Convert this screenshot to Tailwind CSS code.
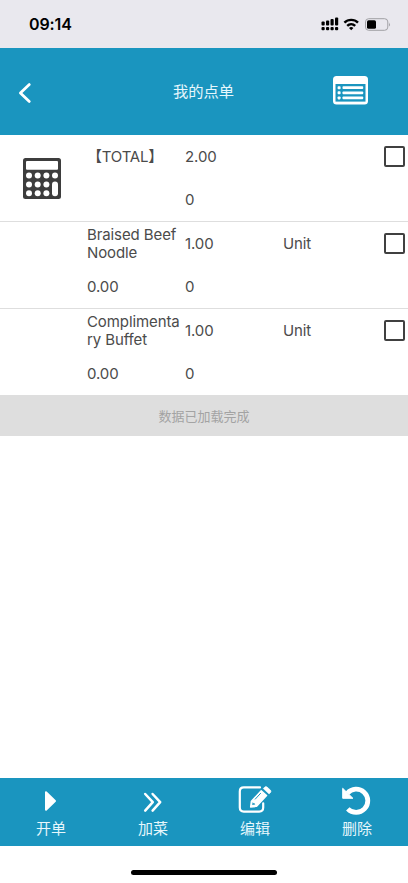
<!DOCTYPE html>
<html lang="zh-CN">
<head>
<meta charset="utf-8">
<meta name="viewport" content="width=device-width, initial-scale=1">
<title>我的点单</title>
<script src="https://cdn.jsdelivr.net/npm/@tailwindcss/browser@4"></script>
</head>
<body class="bg-white">
<div class="flex h-[883px] w-[408px] flex-col overflow-hidden bg-white font-['Inter','Noto_Sans_CJK_SC',sans-serif] text-[15px] leading-[18px] text-[#4b4b4b]">
  <!-- status bar -->
  <div class="flex h-12 shrink-0 items-center justify-between bg-[#e9e8ee] pr-[17px] pl-[29px]">
    <span class="text-[16px] font-semibold tracking-[-0.1px] text-black">09:14</span>
    <svg class="h-4 w-[70px]" viewBox="321 16 70 16" fill="#000">
      <g>
        <rect x="321.5" y="21.5" width="3.2" height="4" rx="1"/><rect x="326" y="20.5" width="3.2" height="5" rx="1"/><rect x="330.5" y="19" width="3.2" height="6.5" rx="1"/><rect x="335" y="17.5" width="3.2" height="8" rx="1"/>
        <rect x="321.5" y="27" width="3.2" height="3.2" rx="1"/><rect x="326" y="27" width="3.2" height="3.2" rx="1"/><rect x="330.5" y="27" width="3.2" height="3.2" rx="1"/><rect x="335" y="27" width="3.2" height="3.2" rx="1"/>
      </g>
      <g fill="none" stroke="#000" stroke-width="2.4">
        <path d="M344.4 22.7a9.7 9.7 0 0 1 13.6 0"/><path d="M347.2 25.9a5.8 5.8 0 0 1 8 0"/>
      </g>
      <path d="M351.2 30.3l-2.2-2.3a3.2 3.2 0 0 1 4.4 0z"/>
      <rect x="365.5" y="18.7" width="22.3" height="11.6" rx="3.2" fill="none" stroke="#a0a0a4"/>
      <rect x="367" y="20.2" width="9" height="8.6" rx="1.6"/>
      <path d="M389 22.5q1.8 2 0 4z" fill="#a0a0a4"/>
    </svg>
  </div>

  <!-- header -->
  <header class="grid h-[87px] shrink-0 grid-cols-[1fr_auto_1fr] items-center bg-[#1a95bf] text-white">
    <svg class="ml-[18px] mt-[3px] h-[22px] w-[14px]" viewBox="0 0 14 22" fill="none" stroke="#fff" stroke-width="2.8" stroke-linecap="round" stroke-linejoin="round"><path d="M11.3 2.6 2.4 11l8.9 8.4"/></svg>
    <h1 class="mr-px text-[15.3px] text-[#e6f7fc]">我的点单</h1>
    <svg class="mr-[40px] mt-[-2px] h-[29px] w-[35px] justify-self-end" viewBox="0 0 35 29">
      <rect width="35" height="28.5" rx="3.5" fill="#fff"/>
      <rect x="2.5" y="8" width="30" height="17.6" fill="#1a95bf"/>
      <g fill="#fff"><rect x="4.6" y="10.2" width="3" height="3" rx=".8"/><rect x="4.6" y="15.3" width="3" height="3" rx=".8"/><rect x="4.6" y="20.4" width="3" height="3" rx=".8"/><rect x="9.5" y="10.3" width="20.7" height="2.8" rx=".8"/><rect x="9.5" y="15.4" width="20.7" height="2.8" rx=".8"/><rect x="9.5" y="20.5" width="20.7" height="2.8" rx=".8"/></g>
    </svg>
  </header>

  <!-- order lines -->
  <main class="flex-1 tracking-[-0.1px]">
    <section class="flex h-[87px] border-b border-[#dedede]">
      <div class="flex w-[87px] items-center pl-[23px]">
        <svg class="h-[41px] w-[38px]" viewBox="0 0 38 41">
          <rect width="38" height="41" rx="2.5" fill="#3d3d3d"/>
          <g fill="#fff"><rect x="3" y="3" width="32" height="8.8" rx="1"/>
          <circle cx="6" cy="17.6" r="3"/><circle cx="14.7" cy="17.6" r="3"/><circle cx="23.4" cy="17.6" r="3"/><circle cx="32" cy="17.6" r="3"/>
          <circle cx="6" cy="26.4" r="3"/><circle cx="14.7" cy="26.4" r="3"/><circle cx="23.4" cy="26.4" r="3"/>
          <circle cx="6" cy="35.2" r="3"/><circle cx="14.7" cy="35.2" r="3"/><circle cx="23.4" cy="35.2" r="3"/>
          <rect x="29" y="23.4" width="6" height="14.8" rx="3"/></g>
        </svg>
      </div>
      <div class="grid flex-1 grid-cols-[98px_98px_1fr] grid-rows-[43px_43px] items-center">
        <span class="text-[15px] tracking-[-0.2px]">【TOTAL】</span><span>2.00</span><span class="mr-[3.5px] size-[21px] justify-self-end rounded-[2px] border-2 border-[#404040]"></span>
        <span></span><span class="pt-px">0</span>
      </div>
    </section>
    <section class="flex h-[87px] border-b border-[#dedede] pl-[87px]">
      <div class="grid flex-1 grid-cols-[98px_98px_1fr] grid-rows-[43px_43px] items-center">
        <span>Braised Beef<br>Noodle</span><span>1.00</span>
        <div class="flex items-center justify-between pr-[3.5px]"><span>Unit</span><span class="size-[21px] rounded-[2px] border-2 border-[#404040]"></span></div>
        <span class="pt-px">0.00</span><span class="pt-px">0</span>
      </div>
    </section>
    <section class="flex h-[86px] pl-[87px]">
      <div class="grid flex-1 grid-cols-[98px_98px_1fr] grid-rows-[43px_43px] items-center">
        <span>Complimenta<br>ry Buffet</span><span>1.00</span>
        <div class="flex items-center justify-between pr-[3.5px]"><span>Unit</span><span class="size-[21px] rounded-[2px] border-2 border-[#404040]"></span></div>
        <span class="pt-px">0.00</span><span class="pt-px">0</span>
      </div>
    </section>
    <div class="flex h-[41px] items-center justify-center bg-[#dedede] text-[13px] tracking-normal text-[#a3a3a3]">数据已加载完成</div>
  </main>

  <!-- actions -->
  <footer class="grid h-[68px] shrink-0 grid-cols-4 bg-[#1a95bf] text-[15px] text-[#e6f7fc]">
    <div class="flex flex-col items-center">
      <svg class="mt-[6px] h-[34px] w-9" viewBox="33 784 36 34"><path d="M46 792.3v17.4l9-8.7z" fill="#fff" stroke="#fff" stroke-width="2" stroke-linejoin="round"/></svg>
      <span class="mt-[2px]">开单</span>
    </div>
    <div class="flex flex-col items-center">
      <svg class="mt-[6px] h-[34px] w-9" viewBox="135 784 36 34" fill="none" stroke="#fff" stroke-width="2.5" stroke-linecap="round" stroke-linejoin="round"><path d="m145.2 794 7.6 8.2-7.6 8.4M152.6 794l7.6 8.2-7.6 8.4"/></svg>
      <span class="mt-[2px]">加菜</span>
    </div>
    <div class="flex flex-col items-center">
      <svg class="mt-[6px] h-[34px] w-9" viewBox="237 784 36 34">
        <path d="M260 787.4h-16.2q-4 0-4 4v16.2q0 4 4 4h15.4q4 0 4-4v-4.3" fill="none" stroke="#fff" stroke-width="2.2" stroke-linecap="round"/>
        <path d="m250.6 807 .8-5.8 9.8-10.4 5.4 4.8-10.2 10.8z" fill="#fff" stroke="#fff" stroke-width="1.4" stroke-linejoin="round"/>
        <path d="m263.3 788.6 1.5-1.6q1.1-.9 2.3.1l3.3 3q1.1 1.1.2 2.2l-1.5 1.6z" fill="#fff" stroke="#fff" stroke-width=".6"/>
        <path d="m255 799.4 5.8-6.3" stroke="#1a95bf" stroke-width="1"/>
        <path d="m252.6 802.2-.4 2.8 3-.4-.3-1.2-1.3-.1z" fill="#1a95bf"/>
      </svg>
      <span class="mt-[2px]">编辑</span>
    </div>
    <div class="flex flex-col items-center">
      <svg class="mt-[6px] h-[34px] w-9" viewBox="339 784 36 34"><path d="M347.4 793.2a11.6 11.6 0 1 1 .4 15.6" fill="none" stroke="#fff" stroke-width="4.8"/><path d="M342.7 788.3v10h10.2z" fill="#fff" stroke="#fff" stroke-linejoin="round"/></svg>
      <span class="mt-[2px]">删除</span>
    </div>
  </footer>
  <div class="flex h-[37px] shrink-0 justify-center pt-[23.5px]"><div class="h-[5px] w-[146px] rounded-full bg-black"></div></div>
</div>
</body>
</html>
